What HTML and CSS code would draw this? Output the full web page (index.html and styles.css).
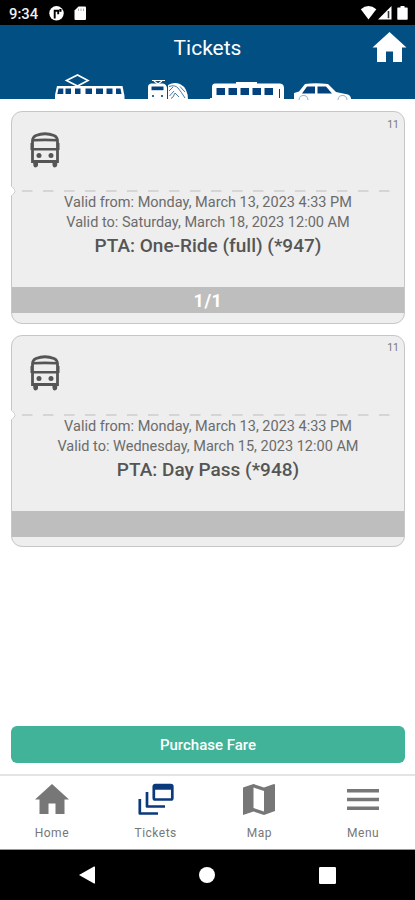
FILE: index.html
```html
<!DOCTYPE html>
<html lang="en">
<head>
<meta charset="utf-8">
<title>Tickets</title>
<link rel="stylesheet" href="styles.css">
</head>
<body>
<svg class="defs" width="0" height="0" aria-hidden="true">
  <symbol id="bus" viewBox="0 0 30 36">
    <path d="M2.500 9Q2.500 5 6 3.500Q15 0 24 3.500Q27.500 5 27.500 9V29.500H2.500Z" fill="none" stroke="#555" stroke-width="2.800"/>
    <path d="M2.500 8.300Q15 7.500 27.500 8.300M2.500 17.300H27.500" fill="none" stroke="#555" stroke-width="2.600"/>
    <path d="M3 29h5v3.500a2.300 2.300 0 0 1-4.600 1zM22.200 29h5v3.500a2.300 2.300 0 0 1-4.600 1zM.5 11h1.500v7H.5zM28 11h1.500v7H28z" fill="#555"/>
    <circle cx="9" cy="23.600" r="2.500" fill="#555"/><circle cx="21" cy="23.600" r="2.500" fill="#555"/>
  </symbol>
  <symbol id="house" viewBox="0 0 34 30">
    <path d="M17 0L34 15.500H29.500V30H20.500V19.500H13.500V30H4.500V15.500H0Z"/>
  </symbol>
</svg>
<div class="status">
  <span class="time">9:34</span>
  <svg class="status-left" viewBox="48 5 40 17" width="40" height="17">
    <circle cx="56.500" cy="13.300" r="7.200" fill="#fff"/>
    <path d="M54.700 18.500V10.700h3.500v3.500" fill="none" stroke="#000" stroke-width="1.900"/><path d="M59.300 9h2.200v2.800h-2.200z" fill="#000"/>
    <path d="M78.500 6.500H85a1 1 0 0 1 1 1V19a1 1 0 0 1-1 1H75.500a1 1 0 0 1-1-1V10.500Z" fill="#fff"/>
    <path d="M78.500 8.500v2.500M81 8.500v2.500M83.500 8.500v2.500" stroke="#999" stroke-width=".8"/>
  </svg>
  <svg class="status-right" viewBox="360 5 50 17" width="50" height="17" fill="#fff">
    <path d="M360.800 9.200Q368.500 3 376.300 9.200L368.500 19.500Z"/>
    <path d="M391.500 6V19.500H378Z"/><path d="M387.700 11h1.600v7.200h-1.600z" fill="#333"/>
    <path d="M400.500 6h4v1.500h2.500a.7.700 0 0 1 .7.700V19a.7.700 0 0 1-.7.700h-9a.7.700 0 0 1-.7-.7V8.200a.7.700 0 0 1 .7-.7h2.500z"/>
  </svg>
</div>
<header class="header">
  <h1>Tickets</h1>
  <svg class="header-home" width="35" height="30" fill="#fff" preserveAspectRatio="none"><use href="#house"/></svg>
  <svg class="skyline" viewBox="0 72 415 28" width="415" height="28">
    <g fill="#fff">
      <path d="M0 99h415v1H0z"/>
      <path d="M55 100V95L57 86H122.500L124.500 96V100Z"/>
      <path d="M148 100V87Q148 84 151 83.500H163Q166.500 84 167 88V100Z"/>
      <path d="M168 100V85Q174 81.500 180 84Q188 88 188 100Z"/>
      <path d="M210 100V98H212V87Q212 84 215 83.600H236V82H257V83.600H280Q284 84 284 88V100Z"/>
      <path d="M294 100V93L299 91.500L305 84Q315 82.500 328 84L336 92L348 94.500Q351.500 96 351 100Z"/>
    </g>
    <path d="M66.500 80.500L77.500 75L88 80.500L77.500 86Z" fill="none" stroke="#fff" stroke-width="1.600"/>
    <path d="M152 80.500h13M154 81l4 3l4-3" fill="none" stroke="#fff" stroke-width="1.200"/>
    <g fill="#04427e">
      <path d="M58.500 88.500h4.800V94h-6zM65.500 88.500H71V94h-5.500zM75 88.500h5.500V94H75zM85.500 88.500H92V94h-6.500zM96 88.500h7V94h-7zM106.500 88.500h6V94h-6zM116 88.500h4.500l1 5.500H116z"/>
      <path d="M151.500 86.500h12v3.700h-12z"/><circle cx="153" cy="96" r="1.100"/><circle cx="162" cy="96" r="1.100"/>
      <path d="M216.500 88h8.500v7h-8.500zM228.500 88h8.500v7h-8.500zM240.500 88h8.500v7h-8.500zM252.500 88h8.500v7h-8.500zM264.500 88h8.500v7h-8.500zM279 89h1v9h-1z"/>
      <path d="M307 86.500h8V93.500H302zM317.500 86.500h8.500l6 7h-14.500z"/>
    </g>
    <g fill="none" stroke="#4b7ba6" stroke-width="1">
      <path d="M169 86.500Q175 84.500 178 88T185 98"/>
      <path d="M169 91L173 87M169.500 96L174 91M173 97L175 93L179 97M180 86.500L185 92M171 98.500L173 97"/>
    </g>
    <path d="M299 100a4.500 4.500 0 0 1 9 0M338 100a4.500 4.500 0 0 1 9 0" fill="none" stroke="#9fb4c6" stroke-width="1.100"/>
  </svg>
</header>
<main class="content">
  <article class="ticket">
    <div class="stub"><svg class="bus" width="30" height="36"><use href="#bus"/></svg><span class="count">11</span></div>
    <svg class="tear" viewBox="0 0 394 10" width="394" height="10"><path d="M0 0L5 4L4 7L0 10Z" fill="#fff"/><path d="M.5 .5Q1.200 1.500 3 2.500Q5.500 5 3 7.500Q1 8.500 .5 9.500" fill="#fff" stroke="#ccc"/><path d="M11 5H381" stroke="#cdcdcd" stroke-width="1.400" stroke-dasharray="10.500 10.500"/></svg>
    <div class="info"><p>Valid from: Monday, March 13, 2023 4:33 PM</p><p>Valid to: Saturday, March 18, 2023 12:00 AM</p><h2>PTA: One-Ride (full) (*947)</h2></div>
    <div class="band">1/1</div>
  </article>
  <article class="ticket">
    <div class="stub"><svg class="bus" width="30" height="36"><use href="#bus"/></svg><span class="count">11</span></div>
    <svg class="tear" viewBox="0 0 394 10" width="394" height="10"><path d="M0 0L5 4L4 7L0 10Z" fill="#fff"/><path d="M.5 .5Q1.200 1.500 3 2.500Q5.500 5 3 7.500Q1 8.500 .5 9.500" fill="#fff" stroke="#ccc"/><path d="M11 5H381" stroke="#cdcdcd" stroke-width="1.400" stroke-dasharray="10.500 10.500"/></svg>
    <div class="info"><p>Valid from: Monday, March 13, 2023 4:33 PM</p><p>Valid to: Wednesday, March 15, 2023 12:00 AM</p><h2>PTA: Day Pass (*948)</h2></div>
    <div class="band"></div>
  </article>
  <button class="buy">Purchase Fare</button>
</main>
<nav class="tabs">
  <a class="tab"><svg width="34" height="34" viewBox="0 0 34 34" fill="#777"><use href="#house" y="1" width="34" height="30"/></svg><span>Home</span></a>
  <a class="tab"><svg width="36" height="34" viewBox="0 0 36 34" fill="none" stroke="#0b3a7c" stroke-width="2.700"><path d="M1.800 16V30.500H20M9 9V23.500H27" stroke-linejoin="round"/><rect x="15.800" y="2" width="18.500" height="14.500" rx="1.500"/><path d="M15.800 4.500H34.300" stroke-width="4.500"/></svg><span>Tickets</span></a>
  <a class="tab"><svg width="32" height="34" viewBox="0 0 32 34" fill="#777"><path fill-rule="evenodd" d="M0 4.500L10.500 1L21 4.500L31 1Q32 1 32 2V28L21 32L10.500 28.500L0 32ZM10.500 4.500V25L21 28.500V8Z"/></svg><span>Map</span></a>
  <a class="tab"><svg width="32" height="34" viewBox="0 0 32 34" fill="none" stroke="#777" stroke-width="3.400"><path d="M0 7.800H32M0 16.500H32M0 25.200H32"/></svg><span>Menu</span></a>
</nav>
<div class="system">
  <svg width="16" height="18" viewBox="0 0 16 18"><path d="M0 9L15 .5Q16 .3 16 1V17Q16 17.700 15 17.500Z" fill="#fff"/></svg>
  <svg width="16" height="16" viewBox="0 0 16 16"><circle cx="8" cy="8" r="8" fill="#fff"/></svg>
  <svg width="17" height="17" viewBox="0 0 17 17"><rect width="17" height="17" rx="1.200" fill="#fff"/></svg>
</div>
</body>
</html>
```

FILE: styles.css
```css
* { box-sizing: border-box; margin: 0; }
body { width: 415px; height: 900px; display: flex; flex-direction: column; background: #fff; font-family: Roboto, sans-serif; overflow: hidden; }
svg { display: block; flex: none; }
.defs { position: absolute; }
.status { height: 25px; background: #000; display: flex; align-items: flex-start; padding: 5px 5px 0 9px; flex: none; }
.time { width: 39px; font-size: 14.800px; line-height: 18px; font-weight: 500; color: #eee; }
.status-right { margin-left: auto; }
.header { height: 75px; flex: none; background: #024f83; position: relative; display: flex; flex-direction: column; justify-content: space-between; }
h1 { font-size: 21px; line-height: 24px; font-weight: 400; color: #fff; text-align: center; padding-top: 11px; }
.header-home { position: absolute; right: 8px; top: 7px; }
.content { flex: 1; display: flex; flex-direction: column; padding: 11px 10px 11px 11px; gap: 11px; }
.ticket { height: 212.500px; border: 1px solid #c6c6c6; border-radius: 11px; background: #eee; display: flex; flex-direction: column; }
.stub { height: 74px; display: flex; justify-content: space-between; padding: 19.500px 5px 0 18px; flex: none; }
.count { font-size: 10.500px; line-height: 12px; color: #777; margin-top: -13px; }
.tear { margin-left: -1px; }
.info { height: 91px; flex: none; text-align: center; color: #6b6b6b; }
.info p { font-size: 14.500px; line-height: 20px; margin-top: -3px; white-space: nowrap; }
.info p + p { margin-top: 0; }
h2 { font-size: 19px; line-height: 25px; font-weight: 500; color: #555; white-space: nowrap; }
.band { height: 26px; background: #bebebe; color: #fff; font-size: 18px; font-weight: 700; line-height: 27px; text-align: center; letter-spacing: .5px; flex: none; }
.buy { margin-top: auto; height: 37px; border: 0; border-radius: 6px; background: #40b399; color: #fff; font: 500 15px/39px Roboto, sans-serif; padding: 0; }
.tabs { height: 76px; flex: none; border-top: 2px solid #e4e4e4; border-bottom: 1px solid #999; display: grid; grid-template-columns: repeat(4, 1fr); }
.tab { display: flex; flex-direction: column; align-items: center; padding-top: 7px; font-size: 12px; line-height: 16px; color: #777; letter-spacing: .5px; }
.tab span { margin-top: 8px; }
.system { height: 50px; background: #000; flex: none; display: flex; justify-content: space-between; align-items: center; padding: 0 79px 0 79px; }
```
